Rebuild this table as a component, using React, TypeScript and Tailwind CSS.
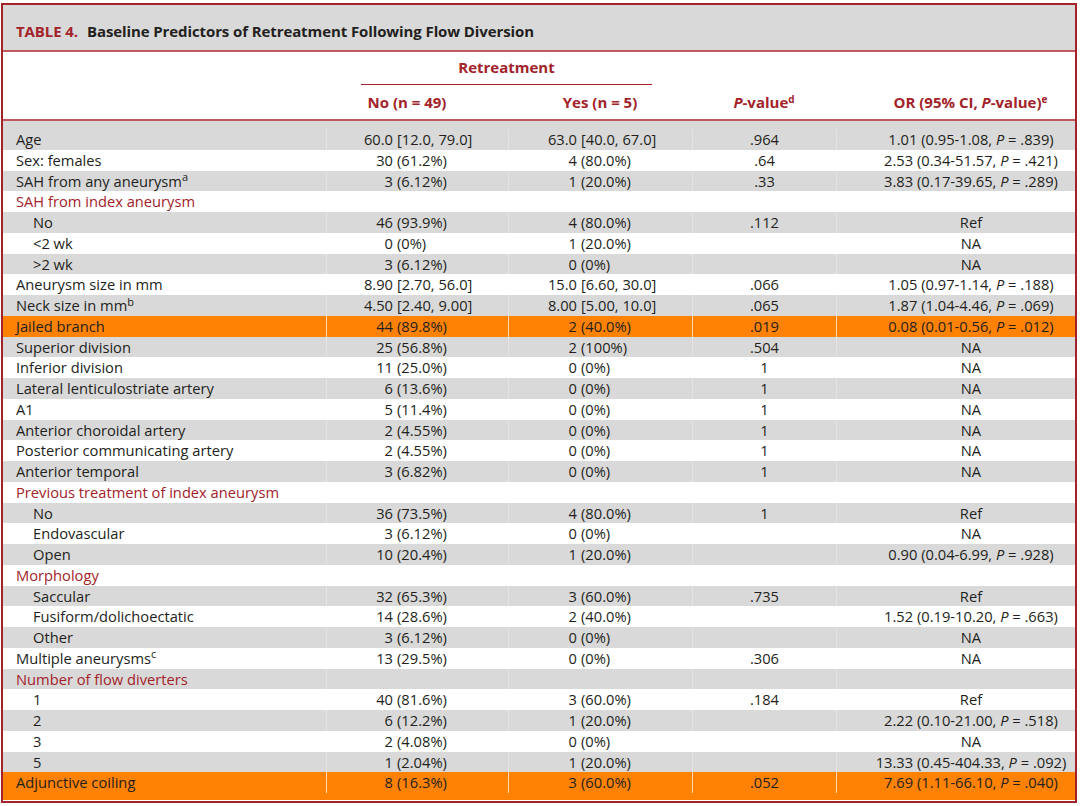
import React from 'react';

type Row = {
  label: React.ReactNode;
  indent?: boolean;
  cat?: boolean;
  no?: string;
  yes?: string;
  p?: string;
  or?: string;
  hl?: boolean;
};

const rows: Row[] = [
  { label: 'Age', no: '60.0 [12.0, 79.0]', yes: '63.0 [40.0, 67.0]', p: '.964', or: '1.01 (0.95-1.08, P = .839)' },
  { label: 'Sex: females', no: '30 (61.2%)', yes: '4 (80.0%)', p: '.64', or: '2.53 (0.34-51.57, P = .421)' },
  { label: <>SAH from any aneurysm<sup>a</sup></>, no: '3 (6.12%)', yes: '1 (20.0%)', p: '.33', or: '3.83 (0.17-39.65, P = .289)' },
  { label: 'SAH from index aneurysm', cat: true },
  { label: 'No', indent: true, no: '46 (93.9%)', yes: '4 (80.0%)', p: '.112', or: 'Ref' },
  { label: '<2 wk', indent: true, no: '0 (0%)', yes: '1 (20.0%)', or: 'NA' },
  { label: '>2 wk', indent: true, no: '3 (6.12%)', yes: '0 (0%)', or: 'NA' },
  { label: 'Aneurysm size in mm', no: '8.90 [2.70, 56.0]', yes: '15.0 [6.60, 30.0]', p: '.066', or: '1.05 (0.97-1.14, P = .188)' },
  { label: <>Neck size in mm<sup>b</sup></>, no: '4.50 [2.40, 9.00]', yes: '8.00 [5.00, 10.0]', p: '.065', or: '1.87 (1.04-4.46, P = .069)' },
  { label: 'Jailed branch', hl: true, no: '44 (89.8%)', yes: '2 (40.0%)', p: '.019', or: '0.08 (0.01-0.56, P = .012)' },
  { label: 'Superior division', no: '25 (56.8%)', yes: '2 (100%)', p: '.504', or: 'NA' },
  { label: 'Inferior division', no: '11 (25.0%)', yes: '0 (0%)', p: '1', or: 'NA' },
  { label: 'Lateral lenticulostriate artery', no: '6 (13.6%)', yes: '0 (0%)', p: '1', or: 'NA' },
  { label: 'A1', no: '5 (11.4%)', yes: '0 (0%)', p: '1', or: 'NA' },
  { label: 'Anterior choroidal artery', no: '2 (4.55%)', yes: '0 (0%)', p: '1', or: 'NA' },
  { label: 'Posterior communicating artery', no: '2 (4.55%)', yes: '0 (0%)', p: '1', or: 'NA' },
  { label: 'Anterior temporal', no: '3 (6.82%)', yes: '0 (0%)', p: '1', or: 'NA' },
  { label: 'Previous treatment of index aneurysm', cat: true },
  { label: 'No', indent: true, no: '36 (73.5%)', yes: '4 (80.0%)', p: '1', or: 'Ref' },
  { label: 'Endovascular', indent: true, no: '3 (6.12%)', yes: '0 (0%)', or: 'NA' },
  { label: 'Open', indent: true, no: '10 (20.4%)', yes: '1 (20.0%)', or: '0.90 (0.04-6.99, P = .928)' },
  { label: 'Morphology', cat: true },
  { label: 'Saccular', indent: true, no: '32 (65.3%)', yes: '3 (60.0%)', p: '.735', or: 'Ref' },
  { label: 'Fusiform/dolichoectatic', indent: true, no: '14 (28.6%)', yes: '2 (40.0%)', or: '1.52 (0.19-10.20, P = .663)' },
  { label: 'Other', indent: true, no: '3 (6.12%)', yes: '0 (0%)', or: 'NA' },
  { label: <>Multiple aneurysms<sup>c</sup></>, no: '13 (29.5%)', yes: '0 (0%)', p: '.306', or: 'NA' },
  { label: 'Number of flow diverters', cat: true },
  { label: '1', indent: true, no: '40 (81.6%)', yes: '3 (60.0%)', p: '.184', or: 'Ref' },
  { label: '2', indent: true, no: '6 (12.2%)', yes: '1 (20.0%)', or: '2.22 (0.10-21.00, P = .518)' },
  { label: '3', indent: true, no: '2 (4.08%)', yes: '0 (0%)', or: 'NA' },
  { label: '5', indent: true, no: '1 (2.04%)', yes: '1 (20.0%)', or: '13.33 (0.45-404.33, P = .092)' },
  { label: 'Adjunctive coiling', hl: true, no: '8 (16.3%)', yes: '3 (60.0%)', p: '.052', or: '7.69 (1.11-66.10, P = .040)' },
];

// italic P inside the OR column
function fmtOr(s?: string) {
  if (!s) return null;
  const i = s.indexOf('P = ');
  if (i < 0) return s;
  return (
    <>
      {s.slice(0, i)}
      <i>P</i>
      {' = ' + s.slice(i + 4)}
    </>
  );
}

// numbers aligned on the opening bracket
function Split({ v, w }: { v?: string; w: string }) {
  if (!v) return null;
  const i = v.indexOf(' ');
  return (
    <div className="flex whitespace-nowrap">
      <span className={`${w} text-right shrink-0`}>{v.slice(0, i)}</span>
      <span className="pl-[4px]">{v.slice(i + 1)}</span>
    </div>
  );
}

export default function App() {
  return (
    <div className="w-[1080px] h-[806px] bg-white pt-[3px] pl-[1px] font-['Open_Sans',sans-serif] text-[14.7px] text-[#231f20]">
      <div className="w-[1076px] h-[800px] border-2 border-[#a3232a] flex flex-col">
        {/* Title */}
        <div className="h-[47px] shrink-0 bg-[#d9d9d9] border-b-2 border-[#c1585c] pl-[13px] pt-[16px] leading-[20px] font-bold text-[15px] tracking-[-0.1px] whitespace-nowrap">
          <span className="text-[#a3232a]">TABLE 4.</span>
          <span className="pl-[9px]">Baseline Predictors of Retreatment Following Flow Diversion</span>
        </div>

        {/* Column headers */}
        <div className="h-[69px] shrink-0 border-b-2 border-[#c1585c] grid grid-cols-[323px_182px_184px_144px_239px] grid-rows-[33px_34px] font-bold text-[15px] text-[#a3232a]">
          <div />
          <div className="col-span-2 flex items-end">
            <div className="ml-[35px] w-[291px] border-b border-[#a3232a] pb-[7px] leading-[20px] text-center">Retreatment</div>
          </div>
          <div />
          <div />
          <div />
          <div className="flex items-center justify-center pr-[20px]">No (n = 49)</div>
          <div className="flex items-center justify-center">Yes (n = 5)</div>
          <div className="flex items-center justify-center">
            <span>
              <i>P</i>-value<sup className="text-[10px]">d</sup>
            </span>
          </div>
          <div className="flex items-center justify-center pl-[30px]">
            <span>
              OR (95% CI, <i>P</i>-value)<sup className="text-[10px]">e</sup>
            </span>
          </div>
        </div>

        {/* Body */}
        <div className="flex-1 flex flex-col">
          {rows.map((r, idx) => {
            const bg = r.hl ? 'bg-[#ff8204]' : idx % 2 === 0 ? 'bg-[#d9d9d9]' : 'bg-white';
            const sep = r.hl ? 'border-[#ffd9b0]' : idx % 2 === 0 ? 'border-[#e4e4e4]' : 'border-white';
            const h = idx === 0 ? 'h-[28.75px] pt-[8px]' : idx === rows.length - 1 ? 'h-[27.75px] pb-[7px]' : 'h-[20.75px]';
            return (
              <div key={idx} className={`grid grid-cols-[323px_182px_184px_144px_239px] leading-[20.75px] shrink-0 ${bg} ${h}`}>
                <div className={`whitespace-nowrap ${r.indent ? 'pl-[30px]' : 'pl-[13px]'} ${r.cat ? 'text-[#a3232a]' : ''}`}>
                  {r.label}
                </div>
                <div className={`border-l ${sep}`}>
                  <Split v={r.no} w="w-[66px]" />
                </div>
                <div className={`border-l ${sep}`}>
                  <Split v={r.yes} w="w-[68px]" />
                </div>
                <div className={`border-l ${sep} text-center`}>{r.p}</div>
                <div className={`border-l ${sep} text-center pl-[30px] whitespace-nowrap`}>{fmtOr(r.or)}</div>
              </div>
            );
          })}
        </div>
      </div>
    </div>
  );
}
